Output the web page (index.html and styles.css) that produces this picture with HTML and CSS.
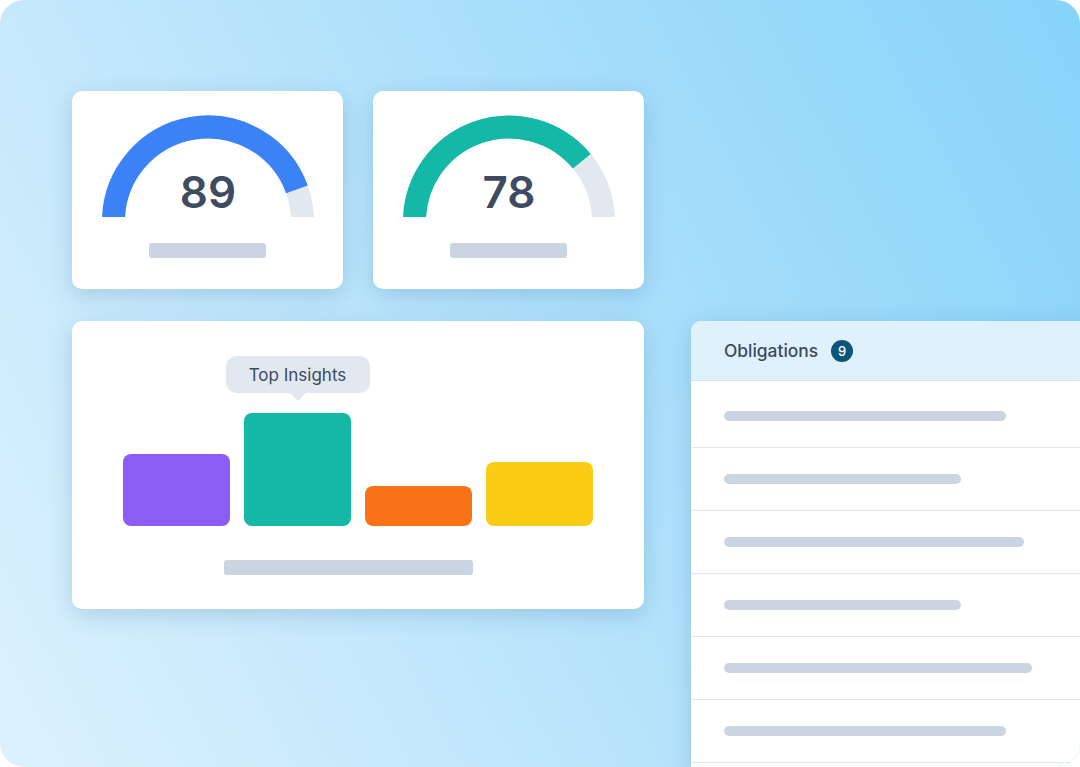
FILE: index.html
```html
<!DOCTYPE html>
<html>
<head>
<meta charset="utf-8">
<link rel="stylesheet" href="styles.css">
</head>
<body>
<div class="frame">
  <div class="left">
    <div class="gauges">
      <div class="card gauge-card">
        <div class="gauge">
          <svg class="gauge-svg" width="214" height="102" viewBox="0 0 214 102">
            <path d="M12.5 106.5 A94.5 94.5 0 0 1 201.5 106.5" fill="none" stroke="#e2e8f0" stroke-width="23"/>
            <path d="M12.5 106.5 A94.5 94.5 0 0 1 195.92 74.48" fill="none" stroke="#3b82f6" stroke-width="23"/>
          </svg>
          <div class="num">89</div>
        </div>
        <div class="ph ph-gauge"></div>
      </div>
      <div class="card gauge-card">
        <div class="gauge">
          <svg class="gauge-svg" width="214" height="102" viewBox="0 0 214 102">
            <path d="M12.5 106.5 A94.5 94.5 0 0 1 201.5 106.5" fill="none" stroke="#e2e8f0" stroke-width="23"/>
            <path d="M12.5 106.5 A94.5 94.5 0 0 1 179.81 46.26" fill="none" stroke="#14b8a6" stroke-width="23"/>
          </svg>
          <div class="num">78</div>
        </div>
        <div class="ph ph-gauge"></div>
      </div>
    </div>
    <div class="card chart-card">
      <div class="bars">
        <div class="col"><div class="bar purple"></div></div>
        <div class="col">
          <div class="tip">Top Insights</div>
          <div class="bar teal"></div>
        </div>
        <div class="col"><div class="bar orange"></div></div>
        <div class="col"><div class="bar yellow"></div></div>
      </div>
      <div class="ph ph-chart"></div>
    </div>
  </div>
  <div class="panel">
    <div class="panel-head">
      <span class="title">Obligations</span>
      <span class="badge">9</span>
    </div>
    <div class="row first"><div class="line" style="width:282px"></div></div>
    <div class="row"><div class="line" style="width:237px"></div></div>
    <div class="row"><div class="line" style="width:300px"></div></div>
    <div class="row"><div class="line" style="width:237px"></div></div>
    <div class="row"><div class="line" style="width:308px"></div></div>
    <div class="row"><div class="line" style="width:282px"></div></div>
  </div>
</div>
</body>
</html>
```

FILE: styles.css
```css
* { box-sizing: border-box; }
html, body { margin: 0; padding: 0; background: #ffffff; }
body { font-family: Inter, "Noto Sans", sans-serif; }

.frame {
  width: 1080px;
  height: 767px;
  border-radius: 24px;
  overflow: hidden;
  background: linear-gradient(62deg, #dcf1fd 0%, #c4e8fc 30%, #ade0fb 55%, #86d3f9 100%);
  display: flex;
  padding: 91px 0 0 72px;
  gap: 47px;
}

.left {
  width: 572px;
  flex: none;
  display: flex;
  flex-direction: column;
  gap: 32px;
}

.gauges {
  display: flex;
  gap: 30px;
}

.card {
  background: #ffffff;
  border-radius: 10px;
  box-shadow: 0 6px 22px rgba(40, 100, 150, 0.22);
}

.gauge-card {
  width: 271px;
  height: 198px;
  display: flex;
  flex-direction: column;
  align-items: center;
  padding-top: 24px;
}

.gauge {
  display: grid;
  width: 214px;
  height: 102px;
}
.gauge > * { grid-area: 1 / 1; }
.gauge-svg { display: block; }
.num {
  align-self: end;
  justify-self: center;
  font-size: 44px;
  line-height: 44px;
  font-weight: 600;
  color: #3e4c61;
  margin-bottom: 3px;
  margin-left: 1px;
}

.ph {
  background: #cbd5e1;
  border-radius: 3px;
  height: 15px;
}
.ph-gauge { width: 117px; margin-top: 26px; }

.chart-card {
  height: 288px;
  padding: 35px 51px 0 51px;
  display: flex;
  flex-direction: column;
}

.bars {
  display: flex;
  align-items: flex-end;
  gap: 14px;
}
.col {
  width: 107px;
  display: flex;
  flex-direction: column;
  align-items: center;
}
.bar { width: 107px; border-radius: 8px; }
.purple { background: #8b5cf6; height: 72px; }
.teal { background: #14b8a6; height: 113px; }
.orange { background: #f97316; height: 40px; }
.yellow { background: #facc15; height: 64px; }

.tip {
  position: relative;
  flex: none;
  width: 144px;
  height: 37px;
  background: #e2e8f0;
  border-radius: 10px;
  color: #3b4a5f;
  font-size: 17px;
  display: flex;
  align-items: center;
  justify-content: center;
  margin-bottom: 20px;
}
.tip::after {
  content: "";
  position: absolute;
  left: 50%;
  bottom: -8px;
  margin-left: -8px;
  border-left: 8px solid transparent;
  border-right: 8px solid transparent;
  border-top: 8px solid #e2e8f0;
}

.ph-chart { width: 249px; margin-top: 34px; margin-left: 101px; }

.panel {
  flex: none;
  width: 420px;
  height: 460px;
  margin-top: 230px;
  background: #ffffff;
  border-radius: 10px 0 0 0;
  box-shadow: 0 4px 22px rgba(40, 100, 150, 0.22);
}
.panel-head {
  height: 60px;
  background: #dff1fd;
  border-bottom: 1px solid #d3e2ec;
  border-radius: 10px 0 0 0;
  display: flex;
  align-items: center;
  padding-left: 33px;
}
.title {
  font-size: 17.4px;
  font-weight: 500;
  color: #3b4a5f;
}
.badge {
  margin-left: 13px;
  width: 22px;
  height: 22px;
  border-radius: 50%;
  background: #0c5478;
  color: #ffffff;
  font-size: 13px;
  font-weight: 500;
  display: flex;
  align-items: center;
  justify-content: center;
}
.row {
  padding: 26px 0 26px 33px;
  border-bottom: 1px solid #e2e8f0;
}
.row.first { padding-top: 30px; }
.line {
  height: 10px;
  border-radius: 5px;
  background: #cbd5e1;
}
```
